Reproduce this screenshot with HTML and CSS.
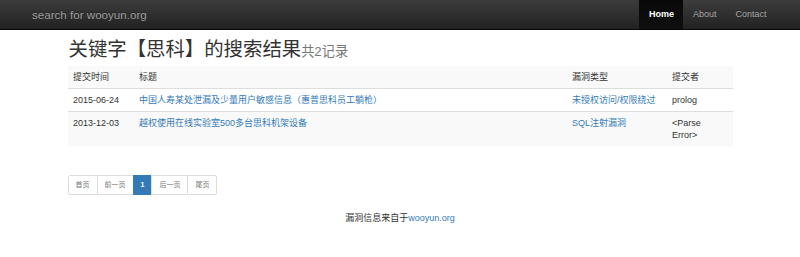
FILE: index.html
```html
<!DOCTYPE html>
<html>

<head>
    <title>search for wooyun.org</title>
    <link rel="stylesheet" href="styles.css">
</head>

<body>
    <div class="navbar">
        <a class="brand" href="#">search for wooyun.org</a>
        <ul class="nav">
            <li class="active"><a href="#">Home</a></li>
            <li><a href="#">About</a></li>
            <li><a href="#">Contact</a></li>
        </ul>
    </div>

    <div class="container">
        <h1 class="title">关键字【思科】的搜索结果<small>共2记录</small></h1>

        <table class="results">
            <colgroup>
                <col class="col-date">
                <col class="col-title">
                <col class="col-type">
                <col class="col-author">
            </colgroup>
            <tbody>
                <tr>
                    <td>提交时间</td>
                    <td>标题</td>
                    <td>漏洞类型</td>
                    <td>提交者</td>
                </tr>
                <tr>
                    <td>2015-06-24</td>
                    <td><a href="#">中国人寿某处泄漏及少量用户敏感信息（惠普思科员工躺枪）</a></td>
                    <td><a href="#">未授权访问/权限绕过</a></td>
                    <td>prolog</td>
                </tr>
                <tr>
                    <td>2013-12-03</td>
                    <td><a href="#">越权使用在线实验室500多台思科机架设备</a></td>
                    <td><a href="#">SQL注射漏洞</a></td>
                    <td>&lt;Parse Error&gt;</td>
                </tr>
            </tbody>
        </table>

        <ul class="pagination">
            <li><a href="#">首页</a></li>
            <li><a href="#">前一页</a></li>
            <li class="active"><a href="#">1</a></li>
            <li><a href="#">后一页</a></li>
            <li><a href="#">尾页</a></li>
        </ul>

        <div class="footer">
            漏洞信息来自于<a href="#">wooyun.org</a>
        </div>
    </div>
</body>

</html>
```

FILE: styles.css
```css
body {
    margin: 0;
    font-family: "Liberation Sans", Arial, "Noto Sans CJK SC", sans-serif;
    font-size: 9px;
    line-height: 11.7px;
    color: #333;
    background-color: #fff;
}

a {
    color: #337ab7;
    text-decoration: none;
}

/* top bar */
.navbar {
    display: flex;
    justify-content: space-between;
    align-items: stretch;
    height: 29px;
    padding: 0 24px 0 23px;
    background: linear-gradient(to bottom, #3c3c3c 0%, #222 100%);
    border-bottom: 1px solid #080808;
}

.brand {
    display: flex;
    align-items: center;
    padding: 0 9px;
    font-size: 11.6px;
    color: #9d9d9d;
    text-shadow: 0 -1px 0 rgba(0, 0, 0, 0.25);
}

.nav {
    display: flex;
    margin: 0;
    padding: 0;
    list-style: none;
}

.nav li a {
    display: flex;
    align-items: center;
    height: 100%;
    padding: 0 9.5px;
    font-size: 9px;
    color: #a8a8a8;
    text-shadow: 0 -1px 0 rgba(0, 0, 0, 0.25);
}

.nav li.active a {
    color: #fff;
    font-weight: bold;
    background: linear-gradient(to bottom, #080808 0%, #0f0f0f 100%);
}

/* content */
.container {
    width: 665px;
    margin: 0 auto;
}

.title {
    margin: 8px 0 3px 1px;
    font-size: 19.4px;
    line-height: 22px;
    font-weight: normal;
    color: #333;
}

.title small {
    font-size: 13.2px;
    color: #777;
}

.results {
    width: 100%;
    table-layout: fixed;
    border-collapse: collapse;
    border-spacing: 0;
}

.col-date {
    width: 66px;
}

.col-type {
    width: 100px;
}

.col-author {
    width: 66px;
}

.results td {
    padding: 5.5px 5.5px 5px;
    vertical-align: top;
    border-top: 1px solid #ddd;
}

.results tr:first-child td {
    border-top: 0;
}

.results tr:nth-of-type(odd) {
    background-color: #f9f9f9;
}

/* pager */
.pagination {
    display: flex;
    margin: 29px 0 0;
    padding: 0;
    list-style: none;
}

.pagination li a {
    display: block;
    height: 18px;
    padding: 0 7px;
    margin-left: -1px;
    font-size: 7px;
    line-height: 18px;
    color: #777;
    background-color: #fff;
    border: 1px solid #ddd;
}

.pagination li:first-child a {
    margin-left: 0;
    border-radius: 2px 0 0 2px;
}

.pagination li:last-child a {
    border-radius: 0 2px 2px 0;
}

.pagination li.active a {
    padding: 0 7px;
    color: #fff;
    font-weight: bold;
    background-color: #337ab7;
    border-color: #337ab7;
}

.footer {
    margin-top: 18px;
    text-align: center;
}
```
